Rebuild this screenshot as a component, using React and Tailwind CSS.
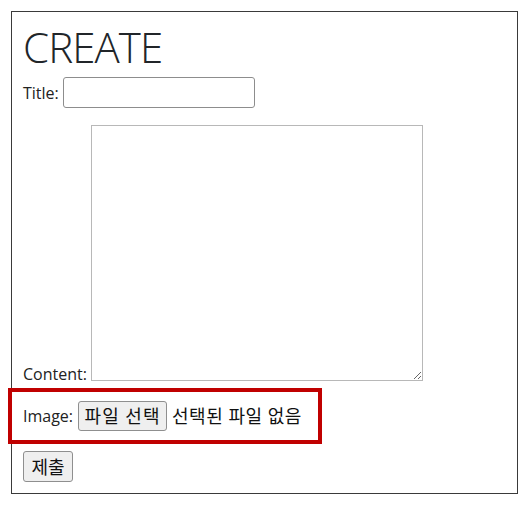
export default function App() {
  const font = { fontFamily: '"Open Sans", "Noto Sans CJK KR", sans-serif' }
  return (
    <div className="bg-white min-h-[506px] pt-[11px] pl-[11px]" style={font}>
      <div className="w-[507px] border border-[#3a3a3a] px-[11px] pt-[11px] pb-[11px] text-[16px] text-[#222]">
        <h1 className="text-[42px] font-light leading-[48px] text-[#212529] h-[48px] tracking-[-0.9px]">CREATE</h1>

        <div className="flex items-center mt-[6px] h-[31px]">
          <label className="leading-none">Title:</label>
          <input className="ml-[4px] w-[192px] h-[31px] border border-[#8d8d8d] rounded-[3px] bg-white outline-none" />
        </div>

        <div className="flex items-end mt-[17px]">
          <label className="leading-[16px] -mb-[1px]">Content:</label>
          <textarea className="ml-[4px] w-[332px] h-[256px] border border-[#b8b8b8] bg-white resize outline-none" />
        </div>

        <div className="flex items-center w-[314px] h-[56px] border-4 border-[#c00000] -ml-[15px] mt-[7px] pl-[11px]">
          <label>Image:</label>
          <button className="ml-[5px] h-[30px] w-[89px] border border-[#8f8f8f] rounded-[3px] bg-[#efefef] text-[#111] text-[18px] leading-none tracking-[1px]">파일 선택</button>
          <span className="ml-[5px] text-[#111] text-[18px] tracking-[0.5px]">선택된 파일 없음</span>
        </div>

        <button className="mt-[7px] w-[50px] h-[31px] border border-[#8f8f8f] rounded-[3px] bg-[#efefef] text-[#111] text-[18px] leading-none">제출</button>
      </div>
    </div>
  )
}
